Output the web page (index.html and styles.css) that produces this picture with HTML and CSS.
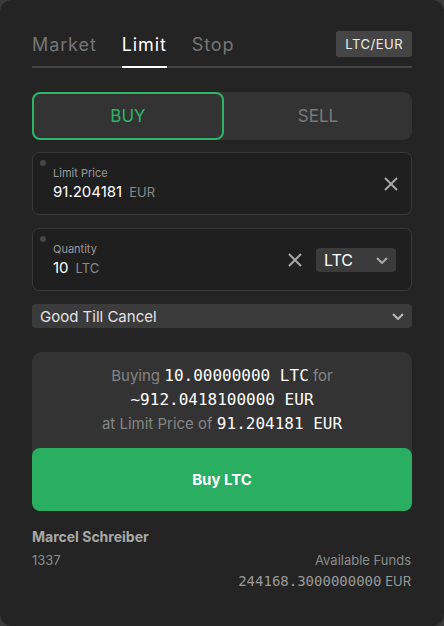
FILE: index.html
```html
<!DOCTYPE html>
<html>
<head>
<meta charset="utf-8">
<link rel="stylesheet" href="styles.css">
</head>
<body>
<div class="panel">
  <div class="header">
    <div class="tabs">
      <span class="tab">Market</span>
      <span class="tab active">Limit</span>
      <span class="tab">Stop</span>
    </div>
    <span class="badge">LTC/EUR</span>
  </div>

  <div class="side">
    <div class="side-btn buy">BUY</div>
    <div class="side-btn sell">SELL</div>
  </div>

  <div class="field first">
    <span class="dot"></span>
    <div class="field-body">
      <div class="label">Limit Price</div>
      <div class="value">91.204181<span class="unit">EUR</span></div>
    </div>
    <svg class="clear clear-price" width="14" height="14" viewBox="0 0 14 14"><path d="M1 1L13 13M13 1L1 13" stroke="#a8a8a8" stroke-width="2" fill="none"/></svg>
  </div>

  <div class="field">
    <span class="dot"></span>
    <div class="field-body">
      <div class="label">Quantity</div>
      <div class="value">10<span class="unit">LTC</span></div>
    </div>
    <svg class="clear" width="14" height="14" viewBox="0 0 14 14"><path d="M1 1L13 13M13 1L1 13" stroke="#a8a8a8" stroke-width="2" fill="none"/></svg>
    <div class="select">
      <span>LTC</span>
      <svg width="12" height="7" viewBox="0 0 12 7"><path d="M1 1L6 6L11 1" stroke="#a8a8a8" stroke-width="2" fill="none"/></svg>
    </div>
  </div>

  <div class="tif">
    <span>Good Till Cancel</span>
    <svg width="12" height="7" viewBox="0 0 12 7"><path d="M1 1L6 6L11 1" stroke="#b8b8b8" stroke-width="2" fill="none"/></svg>
  </div>

  <div class="summary">
    <div class="summary-text">
      <div>Buying <span class="mono">10.00000000 LTC</span> for</div>
      <div><span class="mono">~912.0418100000 EUR</span></div>
      <div>at Limit Price of <span class="mono">91.204181 EUR</span></div>
    </div>
    <div class="submit">Buy LTC</div>
  </div>

  <div class="footer">
    <div class="name">Marcel Schreiber</div>
    <div class="footer-row">
      <div class="account">1337</div>
      <div class="funds">
        <div class="funds-label">Available Funds</div>
        <div class="funds-value"><span class="mono-sm">244168.3000000000</span> EUR</div>
      </div>
    </div>
  </div>
</div>
</body>
</html>
```

FILE: styles.css
```css
* { box-sizing: border-box; }
html, body {
  margin: 0;
  padding: 0;
  background: #3a3a3a;
}
body {
  font-family: Inter, "Noto Sans", sans-serif;
}
.panel {
  width: 444px;
  height: 626px;
  background: #242424;
  border-radius: 12px;
  padding: 31px 32px 0 32px;
}
.header {
  display: flex;
  align-items: flex-start;
  border-bottom: 2px solid #444444;
}
.tabs {
  display: flex;
  gap: 25px;
}
.tab {
  font-size: 18px;
  letter-spacing: 0.9px;
  line-height: 26px;
  padding-top: 1px;
  color: #767676;
  padding-bottom: 8px;
  border-bottom: 2px solid transparent;
  margin-bottom: -2px;
}
.tab.active {
  color: #ffffff;
  border-bottom-color: #ffffff;
}
.badge {
  margin-left: auto;
  background: #454545;
  color: #eeeeee;
  font-size: 13px;
  letter-spacing: 0.5px;
  line-height: 26px;
  height: 26px;
  padding: 0 9px;
  border-radius: 2px;
}
.side {
  display: flex;
  margin-top: 24px;
  height: 48px;
  background: #333333;
  border-radius: 8px;
}
.side-btn {
  flex: 1;
  display: flex;
  align-items: center;
  justify-content: center;
  font-size: 17px;
  border-radius: 8px;
}
.side-btn.buy {
  border: 2px solid #2db566;
  color: #2db566;
}
.side-btn.sell {
  color: #7a7a7a;
}
.field {
  position: relative;
  display: flex;
  align-items: center;
  height: 63px;
  margin-top: 13px;
  background: #1f1f1f;
  border: 1px solid #3a3a3a;
  border-radius: 7px;
  padding: 13px 15px 12px 20px;
}
.field.first { margin-top: 12px; }
.dot {
  position: absolute;
  left: 7px;
  top: 7px;
  width: 6px;
  height: 6px;
  border-radius: 50%;
  background: #454545;
}
.field-body {
  flex: 1;
}
.label {
  font-size: 11px;
  line-height: 14px;
  color: #9a9a9a;
}
.value {
  margin-top: 2px;
  font-size: 15px;
  line-height: 20px;
  color: #ffffff;
}
.unit {
  font-size: 13px;
  color: #8a8a8a;
  margin-left: 7px;
}
.clear { display: block; }
.clear-price { margin-right: -2px; }
.select {
  margin-left: 14px;
  width: 80px;
  height: 24px;
  background: #3b3b3b;
  border-radius: 4px;
  display: flex;
  align-items: center;
  justify-content: space-between;
  padding: 0 8px 0 8px;
  color: #ffffff;
  font-size: 16px;
}
.select svg { display: block; }
.tif {
  margin-top: 13px;
  height: 24px;
  background: #3b3b3b;
  border-radius: 4px;
  display: flex;
  align-items: center;
  justify-content: space-between;
  padding: 0 8px 0 8px;
  color: #e4e4e4;
  font-size: 15px;
}
.tif svg { display: block; }
.summary {
  margin-top: 24px;
  background: #333333;
  border-radius: 10px;
}
.summary-text {
  padding: 12px 0;
  text-align: center;
  font-size: 15px;
  line-height: 24px;
  color: #858585;
}
.mono {
  font-family: "DejaVu Sans Mono", monospace;
  font-size: 16px;
  color: #ffffff;
}
.submit {
  height: 63px;
  background: #29ae62;
  border-radius: 8px;
  display: flex;
  align-items: center;
  justify-content: center;
  color: #ffffff;
  font-weight: 700;
  font-size: 15px;
}
.footer {
  margin-top: 16px;
}
.name {
  font-size: 14px;
  line-height: 20px;
  font-weight: 700;
  color: #a8a8a8;
}
.footer-row {
  display: flex;
  justify-content: space-between;
  margin-top: 3px;
  font-size: 13px;
  line-height: 20px;
  color: #8c8c8c;
}
.funds {
  text-align: right;
  margin-right: 1px;
}
.funds-value {
  margin-top: 1px;
  color: #9a9a9a;
}
.mono-sm {
  font-family: "DejaVu Sans Mono", monospace;
  font-size: 14px;
}
```
